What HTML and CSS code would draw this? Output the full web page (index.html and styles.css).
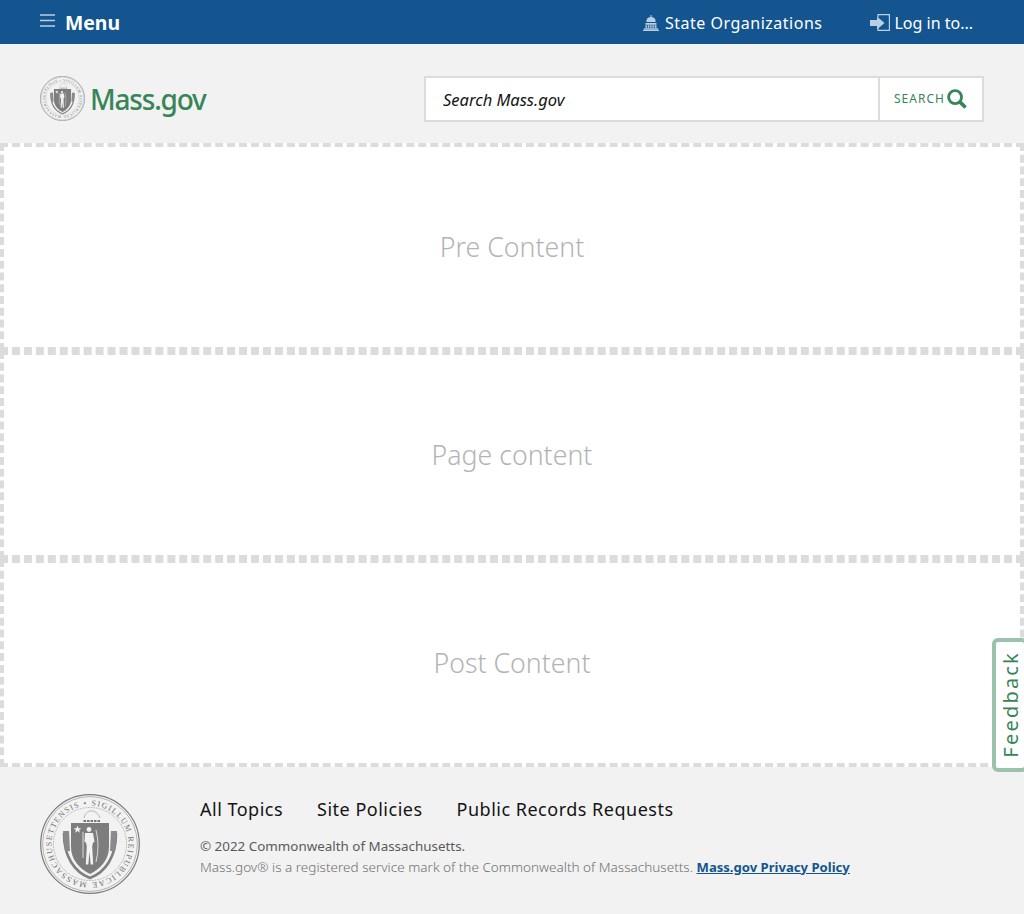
FILE: index.html
```html
<!DOCTYPE html>
<html lang="en">
<head>
    <meta charset="UTF-8">
    <meta name="viewport" content="width=device-width, initial-scale=1.0">
    <title>Mass.gov</title>
    <link rel="stylesheet" href="styles.css">
</head>
<body>

<svg class="defs" width="0" height="0" aria-hidden="true">
    <defs>
        <g id="seal">
            <circle cx="50" cy="50" r="49.300" fill="none" stroke="#7a7a7a" stroke-width="1.200"/>
            <circle cx="50" cy="50" r="47.400" fill="none" stroke="#8a8a8a" stroke-width="0.600"/>
            <circle cx="50" cy="50" r="36.500" fill="none" stroke="#8f8f8f" stroke-width="0.800" stroke-dasharray="0.800 0.800"/>
            <path id="seal-ring" d="M50 88.500A38.500 38.500 0 1 1 50.010 88.500" fill="none"/>
            <text font-family="'Liberation Serif', serif" font-size="8" fill="#6e6e6e"><textPath href="#seal-ring" startOffset="3" textLength="236">MASSACHUSETTENSIS &#8226; SIGILLUM REIPUBLICAE</textPath></text>
            <!-- ribbon round the shield -->
            <path d="M27 38l-3 2c0 22 10 38 26 44 16-6 26-22 26-44l-3-2" fill="none" stroke="#7f7f7f" stroke-width="2.600"/>
            <path d="M23 37h6l1 20h-5zM71 37h6l-2 20h-5z" fill="#8a8a8a"/>
            <path d="M31 29h38v24c0 13-9 22-19 27-10-5-19-14-19-27z" fill="#7d7d7d"/>
            <!-- crest -->
            <path d="M44 24c1-5 5-8 9-7 3 1 6 3 7 7" fill="none" stroke="#b5b5b5" stroke-width="1"/>
            <path d="M43.500 27h17" stroke="#777" stroke-width="1.800" stroke-dasharray="2.500 1"/>
            <!-- figure, star, arrow and bow -->
            <circle cx="49" cy="35.500" r="2.400" fill="#f2f2f2"/>
            <path d="M45 39h8l1.500 9-1.500.5-.8 4 1 18h-2.500l-1.200-13-1.200 13h-2.500l1-18-.8-4-1.500-.5z" fill="#f2f2f2"/>
            <path d="M43 38v26" stroke="#f2f2f2" stroke-width="0.800"/>
            <path d="M56 36q4 15 0 32" fill="none" stroke="#f2f2f2" stroke-width="0.800"/>
            <path d="M37.500 31.500l1 2.700h2.900l-2.300 1.800.9 2.800-2.500-1.700-2.500 1.700.9-2.800-2.300-1.800h2.900z" fill="#f2f2f2"/>
        </g>
    </defs>
</svg>

<header class="topbar">
    <a class="menu-toggle" href="#">
        <svg class="menu-icon" width="15" height="13" viewBox="0 0 15 13">
            <path d="M0 1h15M0 6.500h15M0 12h15" stroke="#b9cfe3" stroke-width="1.700" fill="none"/>
        </svg>
        <span>Menu</span>
    </a>
    <nav class="utility">
        <a class="utility-link" href="#">
            <svg width="16" height="16" viewBox="0 0 16 16">
                <path d="M7.500 0h1v2a4 4 0 0 1 4 5h-9a4 4 0 0 1 4-5z M2.500 8h11v1.700h-11z M2.500 10.200h11v2.600h-11z M1 13.200h14v1.200H1z M0 14.800h16V16H0z" fill="#b9cfe3"/>
                <path d="M4.500 10v3M6.700 10v3M9 10v3M11.300 10v3" stroke="#14558f" stroke-width="0.800"/>
            </svg>
            <span>State Organizations</span>
        </a>
        <a class="utility-link login" href="#">
            <svg width="20" height="17" viewBox="0 0 20 17">
                <path d="M8 3V.6h11.400v15.800H8V14" fill="none" stroke="#b9cfe3" stroke-width="1.200"/>
                <path d="M0 6h7V2.500L14.500 9 7 15.500V12H0z" fill="#b9cfe3"/>
            </svg>
            <span>Log in to...</span>
        </a>
    </nav>
</header>

<div class="masthead">
    <a class="logo" href="#">
        <svg class="logo-seal" width="45" height="45" viewBox="0 0 100 100"><use href="#seal"/></svg>
        <span class="logo-text">Mass.gov</span>
    </a>
    <form class="search">
        <input class="search-input" type="text" placeholder="Search Mass.gov">
        <button class="search-btn" type="button">
            <span>SEARCH</span>
            <svg width="20" height="20" viewBox="0 0 21 21">
                <circle cx="8.500" cy="8.500" r="6.800" fill="none" stroke="#388557" stroke-width="3"/>
                <path d="M13.500 13.500L19.500 19.500" stroke="#388557" stroke-width="3.800"/>
            </svg>
        </button>
    </form>
</div>

<main>
    <section class="region">Pre Content</section>
    <section class="region">Page content</section>
    <section class="region">Post Content</section>
</main>

<a class="feedback" href="#"><span>Feedback</span></a>

<footer class="footer">
    <svg class="footer-seal" width="100" height="100" viewBox="0 0 100 100"><use href="#seal"/></svg>
    <div class="footer-body">
        <ul class="footer-links">
            <li><a href="#">All Topics</a></li>
            <li><a href="#">Site Policies</a></li>
            <li><a href="#">Public Records Requests</a></li>
        </ul>
        <p class="copyright">&copy; 2022 Commonwealth of Massachusetts.</p>
        <p class="legal">Mass.gov&reg; is a registered service mark of the Commonwealth of Massachusetts. <a href="#">Mass.gov Privacy Policy</a></p>
    </div>
</footer>

</body>
</html>
```

FILE: styles.css
```css
* {
    box-sizing: border-box;
}
body {
    font-family: "Noto Sans", sans-serif;
    margin: 0;
    padding: 0;
    background-color: #f2f2f2;
    color: #141414;
    overflow-x: hidden;
}
a {
    text-decoration: none;
    color: inherit;
}
.defs {
    display: block;
    height: 0;
}
.topbar {
    height: 44px;
    background-color: #14558f;
    color: white;
    display: flex;
    align-items: center;
    justify-content: space-between;
    padding: 0 51px 0 40px;
}
.menu-toggle {
    display: flex;
    align-items: center;
    gap: 10px;
    font-size: 19.400px;
    font-weight: 700;
}
.menu-icon {
    margin-top: -3px;
}
.utility {
    display: flex;
    gap: 48px;
    padding-top: 1px;
}
.utility-link {
    display: flex;
    align-items: center;
    gap: 6px;
    font-size: 16px;
    letter-spacing: 0.5px;
}
.utility-link.login {
    gap: 4px;
    letter-spacing: 0;
}
.masthead {
    height: 99px;
    display: flex;
    align-items: center;
    justify-content: space-between;
    padding: 10px 40px 0;
}
.logo {
    display: flex;
    align-items: center;
    gap: 5px;
}
.logo-text {
    font-size: 28px;
    font-weight: 500;
    color: #388557;
    letter-spacing: -1.200px;
}
.search {
    display: flex;
    width: 560px;
    height: 46px;
    border: 2px solid #dcdcdc;
    background-color: white;
}
.search-input {
    flex: 1;
    border: none;
    border-right: 2px solid #dcdcdc;
    padding: 2px 17px 0;
    font-family: inherit;
    font-size: 16.500px;
    font-style: italic;
    color: #141414;
    outline: none;
}
.search-input::placeholder {
    color: #141414;
    opacity: 1;
}
.search-btn {
    width: 102px;
    display: flex;
    align-items: center;
    gap: 2px;
    padding: 0 0 0 14px;
    border: none;
    background-color: white;
    color: #388557;
    font-family: inherit;
    font-size: 12px;
    font-weight: 400;
    letter-spacing: 1px;
}
.region {
    height: 208px;
    padding-bottom: 2px;
    display: flex;
    align-items: center;
    justify-content: center;
    background-color: white;
    border: 4px dashed #dcdcdc;
    color: #b4b4b4;
    font-size: 26.700px;
    font-weight: 300;
}
.feedback {
    position: absolute;
    right: -4px;
    top: 638px;
    width: 36px;
    height: 134px;
    padding-bottom: 2px;
    background-color: white;
    border: 4px solid #9bc2aa;
    border-radius: 6px;
    color: #388557;
    display: flex;
    align-items: center;
    justify-content: center;
}
.feedback span {
    writing-mode: vertical-rl;
    transform: rotate(180deg);
    font-size: 20px;
    letter-spacing: 2.200px;
}
.footer {
    height: 147px;
    display: flex;
    gap: 60px;
    padding: 27px 40px 0;
}
.footer-links {
    list-style: none;
    margin: 0 0 15px;
    padding: 3px 0 0;
    display: flex;
    gap: 34px;
    font-size: 18px;
    letter-spacing: 0.5px;
}
.copyright, .legal {
    margin: 0;
    line-height: 20.500px;
}
.copyright {
    color: #5a5a5a;
    font-size: 13.400px;
}
.legal {
    color: #707070;
    font-size: 13.540px;
    font-weight: 300;
}
.legal a {
    color: #14558f;
    font-size: 13.100px;
    font-weight: 700;
    text-decoration: underline;
}
```
